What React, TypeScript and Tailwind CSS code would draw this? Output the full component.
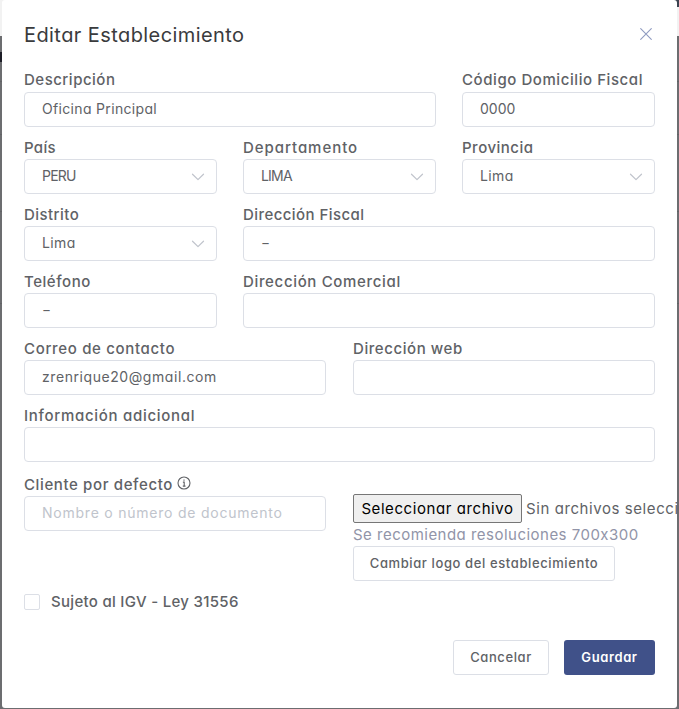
import type { ReactNode } from 'react';

function Chevron() {
  return (
    <svg viewBox="0 0 14 8" className="h-2 w-3.5 shrink-0" fill="none" stroke="#c0c4cc" strokeWidth="1.2" strokeLinecap="round" strokeLinejoin="round">
      <path d="M1.5 1.2 7 6.6l5.500-5.400" />
    </svg>
  );
}

function Field({ label, value, placeholder, select, className = '', labelClass = 'pt-0.5', tracking = '', valueTracking = '', icon }: {
  label: string; value?: string; placeholder?: string; select?: boolean; className?: string; labelClass?: string; tracking?: string; valueTracking?: string; icon?: ReactNode;
}) {
  return (
    <div className={className}>
      <div className={`flex h-6 items-center whitespace-nowrap text-[15px] font-medium text-[#606266] ${labelClass}`}>
        <span className={tracking}>{label}</span>
        {icon}
      </div>
      <div className="flex h-[35px] items-center justify-between rounded-[4px] border border-[#dcdfe6] bg-white pl-[17px] pr-[11px] text-[14px] text-[#606266]">
        {value && <span className={`pb-0.5 ${valueTracking}`}>{value}</span>}
        {placeholder && <span className={`pb-0.5 text-[#c0c4cc] ${valueTracking}`}>{placeholder}</span>}
        {select && <Chevron />}
      </div>
    </div>
  );
}

export default function App() {
  return (
    <div className="relative h-[709px] w-[679px] overflow-hidden bg-[#6c6d70] font-['Inter','Noto_Sans',sans-serif] [font-feature-settings:'cv11'_1,'calt'_0]">
      <div className="absolute inset-0 flex flex-col">
        <div className="flex h-[7px]"><div className="w-[340px] bg-[#f2f2f2]" /><div className="flex-1 bg-[#3b4350]" /></div>
        <div className="h-[29px] bg-[#f2f2f2]" />
        <div className="h-4" />
        <div className="h-[10px] w-[340px] bg-[#1c1d26]" />
        <div className="mt-[19px] h-px bg-[#626366]" />
        <div className="mt-[52px] h-px bg-[#626366]" />
        <div className="mt-[76px] h-px bg-[#626366]" />
        <div className="mt-[91px] h-px bg-[#626366]" />
      </div>
      <div className="relative ml-[2px] h-[708px] w-[675px] rounded-[3px] bg-white px-[22px]">
        <header className="flex h-[68px] items-center justify-between">
          <h1 className="pt-0.5 text-[20px] leading-6 tracking-[0.42px] text-[#3a3b3d]">Editar Establecimiento</h1>
          <svg viewBox="0 0 12 12" className="mr-[3px] size-3" fill="none" stroke="#8f9bc0" strokeWidth="1.100" strokeLinecap="round"><path d="M.7.700l10.600 10.600M11.300.700.700 11.300" /></svg>
        </header>
        <div className="grid w-[631px] grid-cols-3 gap-x-[26px] gap-y-2">
          <Field className="col-span-2" labelClass="" label="Descripción" tracking="tracking-[0.5px]" value="Oficina Principal" valueTracking="tracking-[0.33px]" />
          <Field labelClass="" label="Código Domicilio Fiscal" tracking="tracking-[0.57px]" value="0000" />
          <Field label="País" tracking="tracking-[0.3px]" value="PERU" valueTracking="tracking-[-0.8px]" select />
          <Field label="Departamento" tracking="tracking-[0.95px]" value="LIMA" valueTracking="tracking-[-0.8px]" select />
          <Field label="Provincia" tracking="tracking-[0.5px]" value="Lima" valueTracking="tracking-[0.4px]" select />
          <Field label="Distrito" tracking="tracking-[0.45px]" value="Lima" valueTracking="tracking-[0.4px]" select />
          <Field className="col-span-2" label="Dirección Fiscal" tracking="tracking-[0.43px]" value="-" valueTracking="origin-left scale-x-140" />
          <Field label="Teléfono" tracking="tracking-[0.55px]" value="-" valueTracking="origin-left scale-x-140" />
          <Field className="col-span-2" label="Dirección Comercial" tracking="tracking-[0.66px]" />
        </div>
        <div className="mt-2 grid w-[631px] grid-cols-2 gap-x-[27px] gap-y-2">
          <Field label="Correo de contacto" tracking="tracking-[0.67px]" value="zrenrique20@gmail.com" valueTracking="tracking-[0.57px]" />
          <Field label="Dirección web" tracking="tracking-[0.57px]" />
          <Field className="col-span-2" label="Información adicional" tracking="tracking-[0.7px]" />
        </div>
        <div className="mt-[10px] flex gap-[27px]">
          <Field className="w-[302px] shrink-0" label="Cliente por defecto" tracking="tracking-[0.62px]" placeholder="Nombre o número de documento" valueTracking="tracking-[0.77px]"
            icon={<svg viewBox="0 0 14 14" className="mb-1 ml-1 size-3.5" fill="none" stroke="#606266" strokeWidth="1.100"><circle cx="7" cy="7" r="6" /><path d="M5.900 6.100h1.300v4M5.800 10.100h2.700M7 3.400v1.300" /></svg>} />
          <div className="w-[326px] shrink-0 pt-[22px]">
            <div className="flex h-[29px] items-center whitespace-nowrap text-[15px] tracking-[0.58px] text-[#606266]">
              <button className="h-[29px] w-[169px] shrink-0 rounded-[2px] border border-[#767676] bg-[#efefef] pt-0.5 tracking-[0.58px] text-black">Seleccionar archivo</button>
              <span className="ml-1 pt-0.5">Sin archivos seleccionados</span>
            </div>
            <div className="h-[23px] whitespace-nowrap text-[15px] leading-6 tracking-[0.48px] text-[#9194a8]">Se recomienda resoluciones 700x300</div>
            <button className="h-[35px] w-[262px] whitespace-nowrap rounded-[3px] border border-[#dcdfe6] text-[13px] font-medium tracking-[0.61px] text-[#606266]">Cambiar logo del establecimiento</button>
          </div>
        </div>
        <div className="mt-[9px] flex h-6 items-center gap-[11px]">
          <span className="size-4 rounded-[2px] border border-[#dcdfe6]" />
          <span className="text-[15px] font-medium tracking-[0.3px] text-[#606266]">Sujeto al IGV - Ley 31556</span>
        </div>
        <footer className="mt-[26px] flex h-[35px] w-[631px] justify-end gap-[15px] text-[13px] font-medium tracking-[0.6px]">
          <button className="w-24 rounded-[3px] border border-[#dcdfe6] tracking-[0.6px] text-[#606266]">Cancelar</button>
          <button className="w-[91px] rounded-[3px] bg-[#405189] font-semibold tracking-[0.6px] text-white">Guardar</button>
        </footer>
      </div>
    </div>
  );
}
